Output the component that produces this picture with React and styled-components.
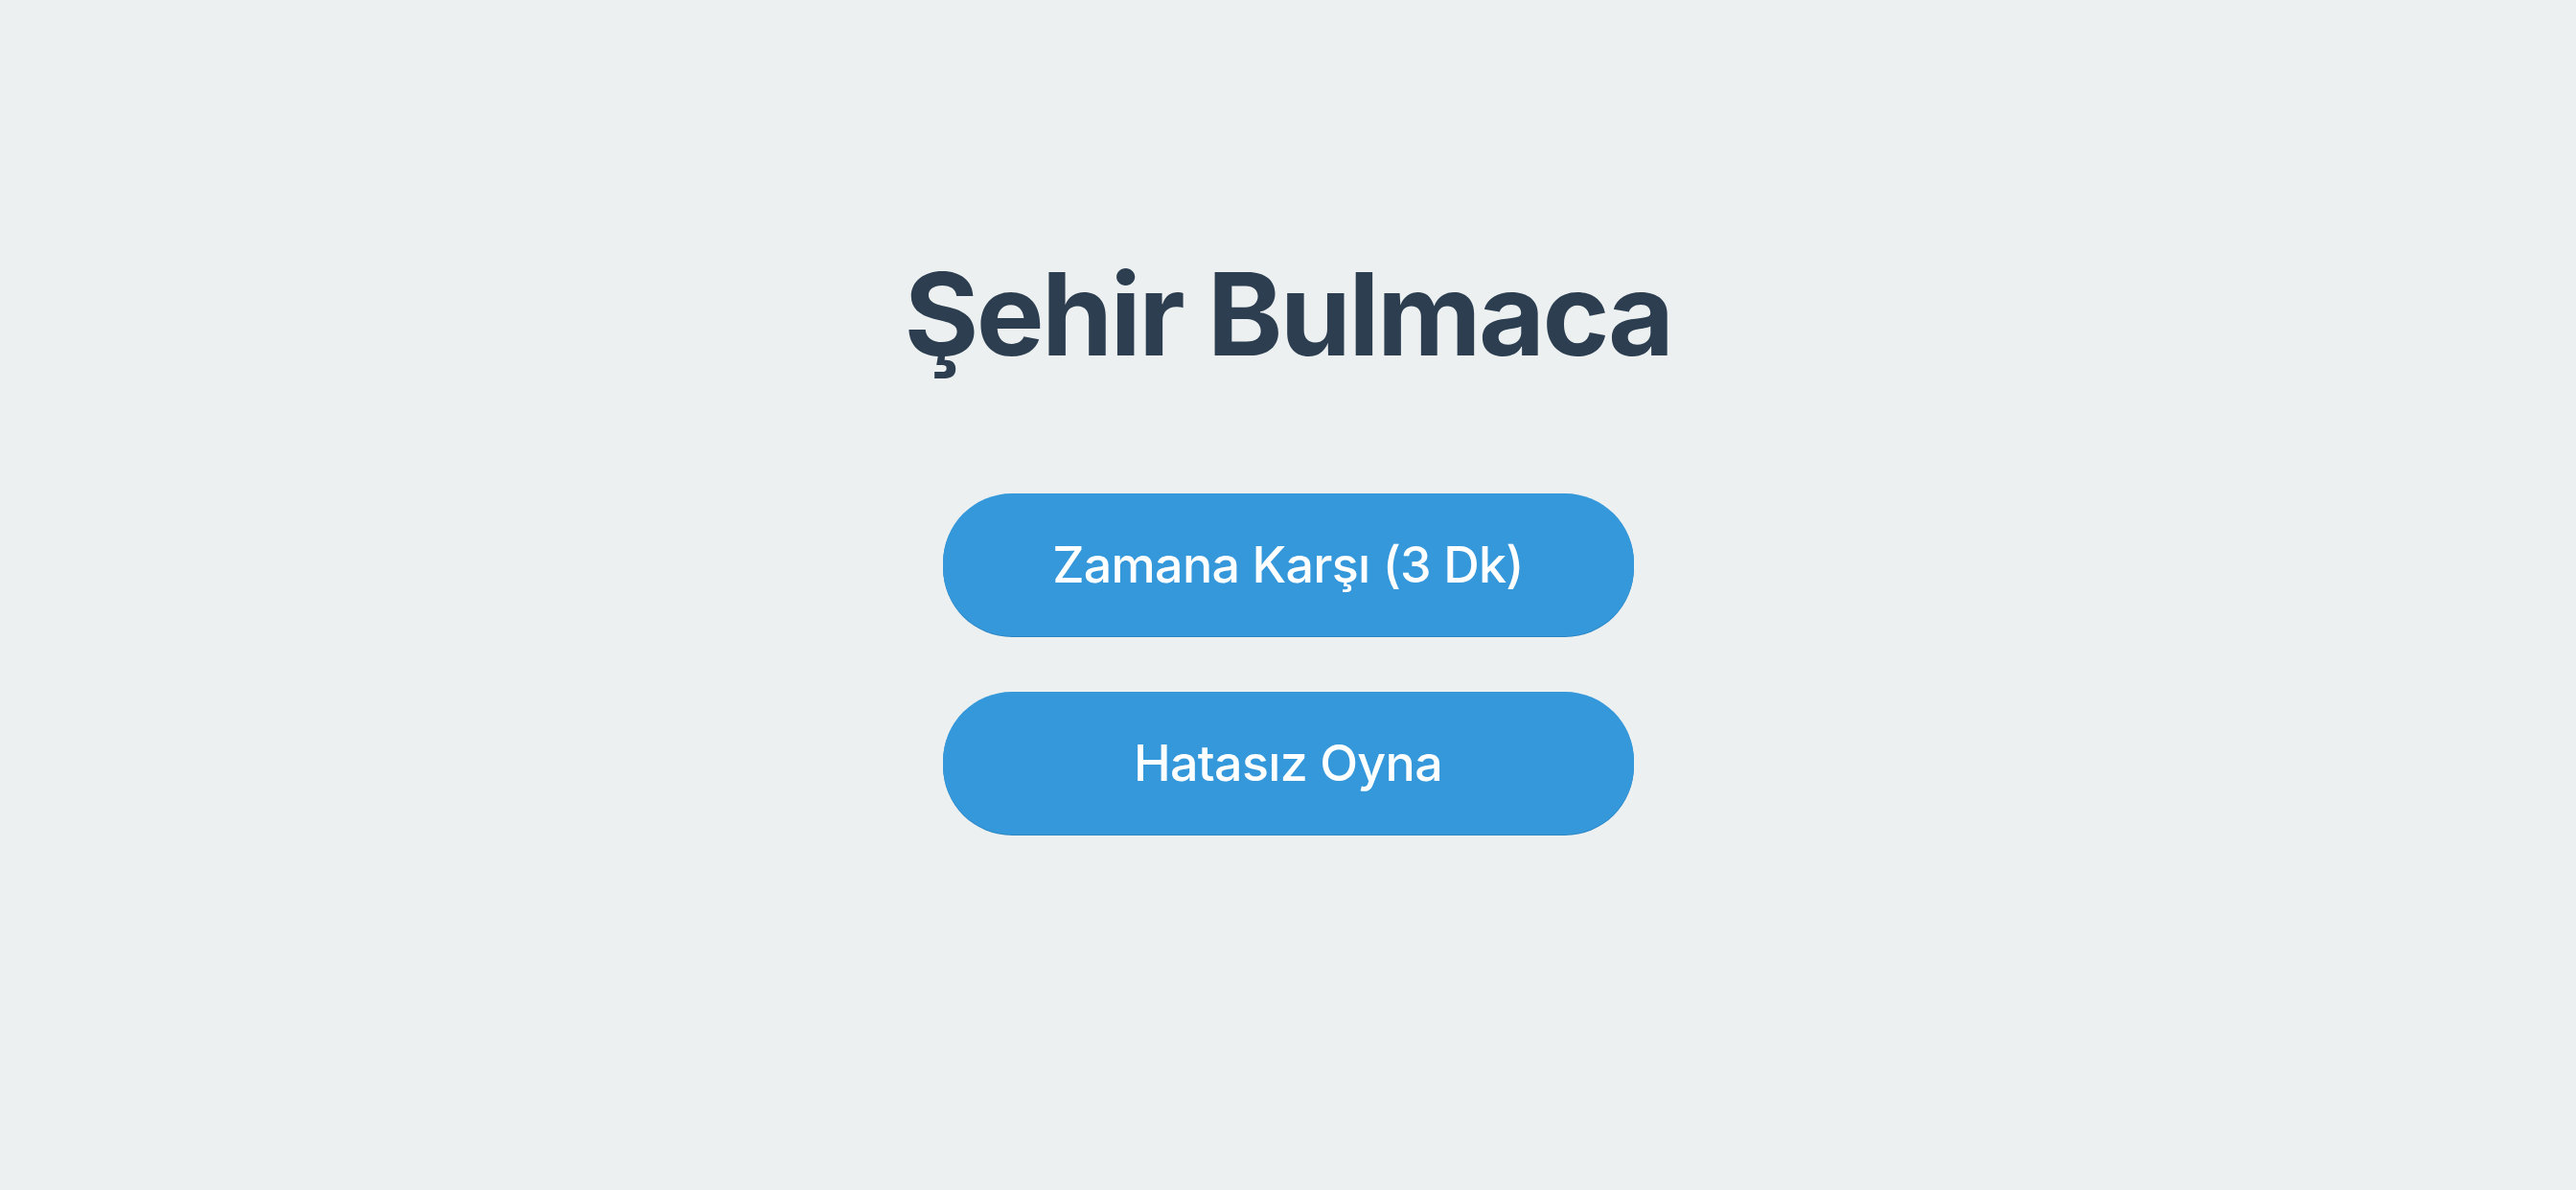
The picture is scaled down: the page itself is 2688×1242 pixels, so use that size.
import React from "react";
import styled, { createGlobalStyle } from "styled-components";

const GlobalStyle = createGlobalStyle`
  html, body {
    margin: 0;
    padding: 0;
    background: #ecf0f1;
  }
  * {
    box-sizing: border-box;
  }
`;

const Screen = styled.main`
  min-height: 100vh;
  display: flex;
  flex-direction: column;
  align-items: center;
  padding-top: 256px;
  background: #ecf0f1;
  font-family: Inter, "Noto Sans", "Liberation Sans", sans-serif;
`;

const Title = styled.h1`
  margin: 0 0 115px;
  font-size: 119px;
  line-height: 144px;
  font-weight: 700;
  color: #2c3e50;
  letter-spacing: -2.6px;
`;

const Menu = styled.div`
  display: flex;
  flex-direction: column;
  gap: 58px;
`;

const ModeButton = styled.button`
  width: 721px;
  height: 149px;
  border: none;
  border-radius: 72px;
  background: #3498db;
  box-shadow: 0 1px 0 #2d86c4;
  color: #ffffff;
  font-family: inherit;
  font-size: 52px;
  font-weight: 500;
  letter-spacing: -0.7px;
  cursor: pointer;
`;

const modes = ["Zamana Karşı (3 Dk)", "Hatasız Oyna"];

export default function App() {
  return (
    <>
      <GlobalStyle />
      <Screen>
        <Title>Şehir Bulmaca</Title>
        <Menu>
          {modes.map((m) => (
            <ModeButton key={m}>{m}</ModeButton>
          ))}
        </Menu>
      </Screen>
    </>
  );
}
